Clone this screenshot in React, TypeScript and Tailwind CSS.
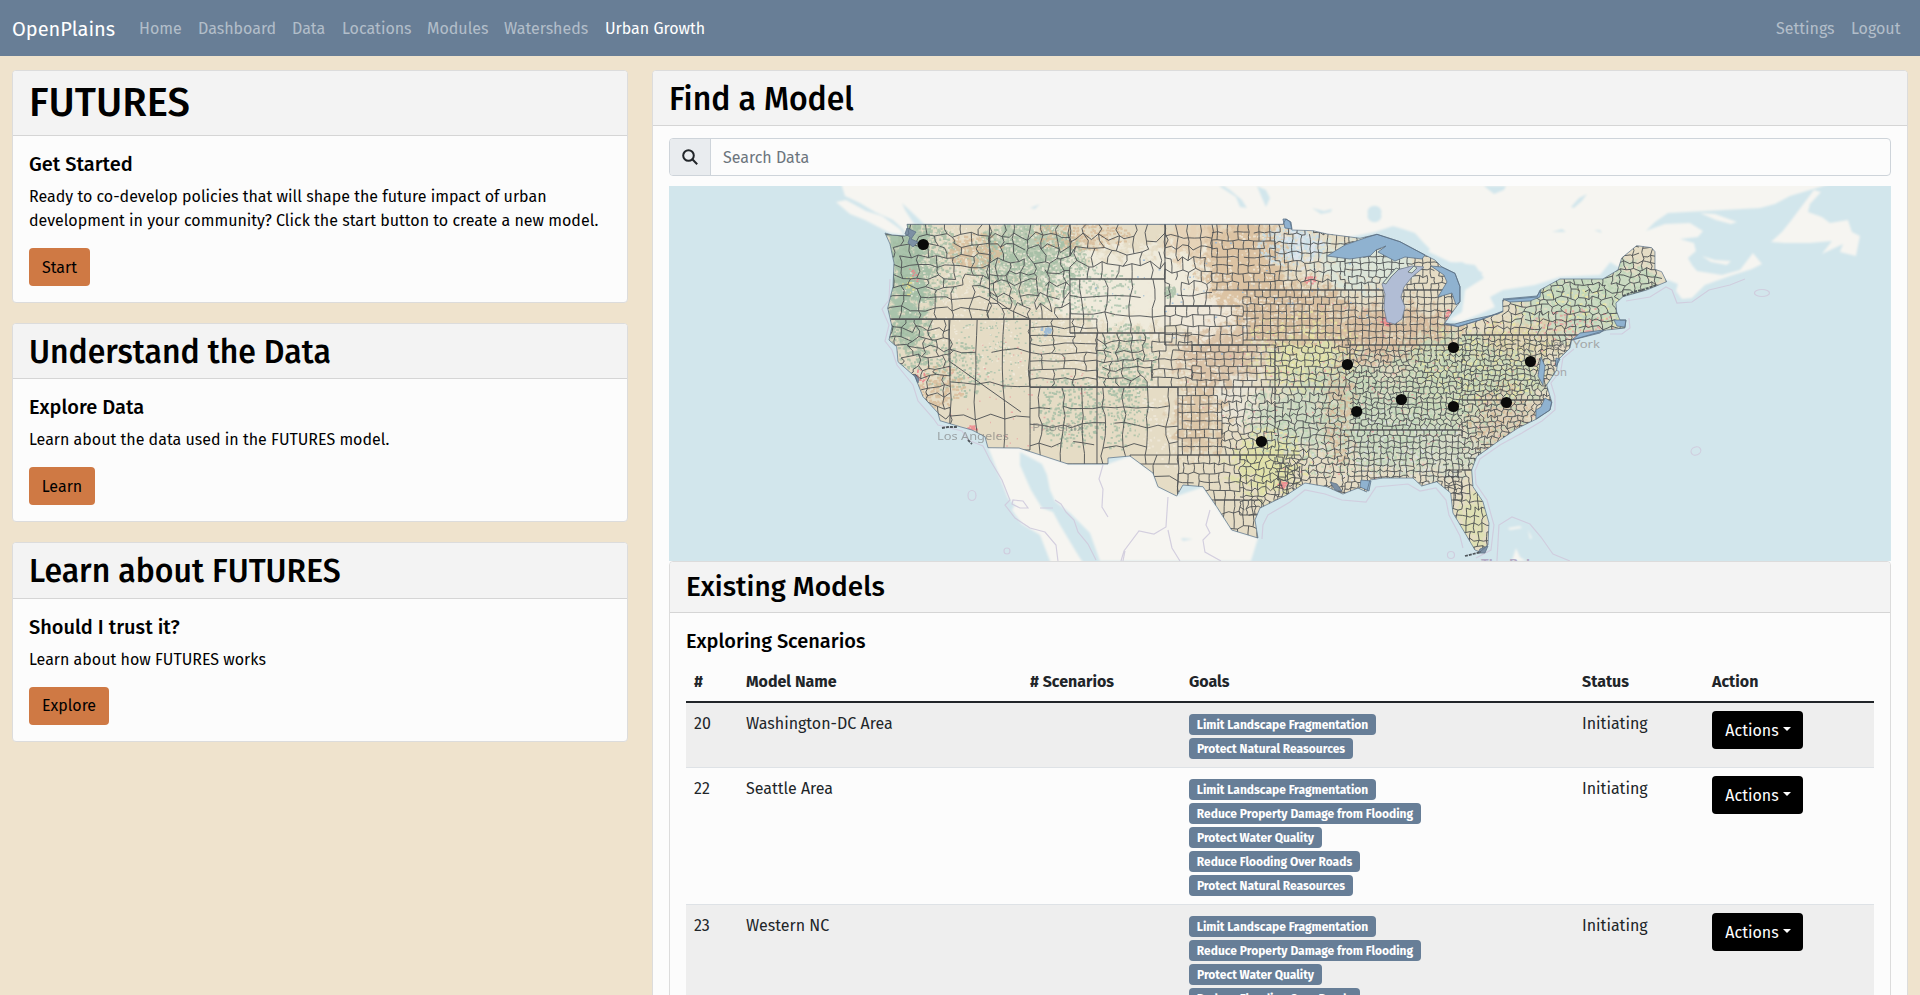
import React from "react";

const NAV: [string, string][] = [
  ["Home", "w-[43px]"],
  ["Dashboard", "w-[78px]"],
  ["Data", "w-[34px]"],
  ["Locations", "w-[69px]"],
  ["Modules", "w-[61px]"],
  ["Watersheds", "w-[85px]"],
  ["Urban Growth", "w-[100px]"],
];

const LIMIT: [string, string] = ["Limit Landscape Fragmentation", "w-[187px]"];
const DAMAGE: [string, string] = ["Reduce Property Damage from Flooding", "w-[232px]"];
const WATER: [string, string] = ["Protect Water Quality", "w-[133px]"];
const ROADS: [string, string] = ["Reduce Flooding Over Roads", "w-[171px]"];
const NATURAL: [string, string] = ["Protect Natural Reasources", "w-[164px]"];

const MODELS = [
  { id: 20, name: "Washington-DC Area", goals: [LIMIT, NATURAL] },
  { id: 22, name: "Seattle Area", goals: [LIMIT, DAMAGE, WATER, ROADS, NATURAL] },
  { id: 23, name: "Western NC", goals: [LIMIT, DAMAGE, WATER, ROADS, NATURAL] },
];

/* ---------- map geometry ---------- */

const US =
  "M885 233L892 235L905 236L909 234L907 224.300L1283 224.300L1286 219L1290 221.700L1292 230L1313 230.700L1327 234L1343 236L1360 238.300L1377 234.300L1400 241.700L1425 255L1435 260L1442 267L1455 273.300L1460 286.700L1460 301.700L1449 317L1445 323L1458 326.700L1480 320L1503 311.700L1502.700 300L1537 297L1540 290L1560 279L1603 279L1618 270L1621.700 258L1636.700 245.700L1651.700 247.700L1655 251.700L1655 269.300L1661.700 271.700L1666.700 281.700L1646.700 290L1623 296.700L1616 303L1616.700 311.700L1620 320L1626 320L1625 328L1606.700 330L1571.700 340L1570 348L1558 360L1556.700 370L1546.700 385L1551.700 401.700L1550 410L1536.700 419L1518 428L1500 440L1476.700 456.700L1471.700 470L1473 486.700L1483 501.700L1489 523L1488 545L1480 552L1475 550L1465 533L1453 513L1450.700 493L1436.700 481.700L1421.700 486L1413 478L1383 478L1370 480L1366.700 492L1358 488L1343 494L1326.700 486.700L1305 483L1286.700 495L1260 508L1255 520L1258 538L1231.700 530L1216.700 506.700L1203 486.700L1183 485L1176.700 496L1158 486.700L1153 473L1130 456L1108 458L1108 464L1068 464L1019 448L988 447.700L985 436.700L972 430L960 426.700L940 420.700L938 413L923 396.700L915 376.700L898 361.700L896.700 346.700L889 340L892 326.700L887.700 308L893 286.700L894 263L890 244Z";

function rng(seed: number) {
  let s = seed;
  return () => {
    s = (s * 1664525 + 1013904223) % 4294967296;
    return s / 4294967296;
  };
}

type Zone = [x0: number, y0: number, x1: number, y1: number, w: number, h: number, jitter: number];

const ZONES: Zone[] = [
  [884, 224, 989, 319, 19, 11, 0.3],
  [989, 224, 1070, 319, 13, 12, 0.45],
  [1070, 279, 1165, 333, 24, 19, 0.2],
  [1070, 224, 1165, 279, 15, 13, 0.4],
  [884, 319, 950, 425, 14, 10, 0.45],
  [950, 319, 1030, 450, 27, 32, 0.12],
  [1030, 319, 1097, 387, 24, 9, 0.2],
  [1097, 333, 1152, 387, 15, 9, 0.35],
  [1030, 387, 1178, 464, 22, 19, 0.2],
  [1130, 455, 1178, 500, 24, 24, 0.35],
  [1152, 333, 1192, 387, 13, 9, 0.15],
  [1165, 224, 1212, 306, 12, 12, 0.25],
  [1212, 224, 1275, 290, 11, 8.500, 0.12],
  [1165, 306, 1243, 345, 12, 10, 0.15],
  [1275, 224, 1345, 290, 9, 9, 0.2],
  [1243, 290, 1345, 340, 8, 7, 0.1],
  [1192, 345, 1275, 387, 9, 7, 0.1],
  [1178, 387, 1222, 455, 9, 8.500, 0.06],
  [1178, 455, 1240, 500, 10, 9, 0.15],
  [1215, 500, 1262, 540, 9, 12, 0.2],
  [1222, 387, 1275, 455, 8, 7.500, 0.3],
  [1240, 455, 1300, 515, 7.500, 7, 0.4],
  [1275, 340, 1350, 387, 7.500, 6.500, 0.28],
  [1275, 387, 1345, 500, 7.500, 7, 0.35],
  [1345, 236, 1462, 290, 8, 7, 0.2],
  [1345, 290, 1462, 345, 7, 6.500, 0.15],
  [1350, 345, 1462, 430, 6.200, 5.200, 0.4],
  [1345, 430, 1462, 500, 6.500, 6, 0.3],
  [1462, 240, 1670, 335, 9, 7.500, 0.35],
  [1462, 335, 1580, 400, 6, 5, 0.4],
  [1462, 400, 1560, 470, 6.500, 5.500, 0.4],
  [1445, 470, 1495, 555, 8, 8, 0.25],
];

function buildCounties() {
  const r = rng(7);
  let d = "";
  for (const [x0, y0, x1, y1, w, h, j] of ZONES) {
    const rows = Math.max(1, Math.round((y1 - y0) / h));
    const cols = Math.max(1, Math.round((x1 - x0) / w));
    const ch = (y1 - y0) / rows;
    const cw = (x1 - x0) / cols;
    const pts: number[][][] = [];
    for (let a = 0; a <= rows; a++) {
      const line: number[][] = [];
      for (let b = 0; b <= cols * 2; b++) {
        const edge = a === 0 || a === rows;
        line.push([
          x0 + (b * cw) / 2 + (b === 0 || b === cols * 2 ? 0 : (r() - 0.5) * cw * j),
          y0 + a * ch + (edge ? 0 : (r() - 0.5) * 1.8 * ch * j),
        ]);
      }
      pts.push(line);
    }
    for (let a = 0; a <= rows; a++) {
      let pen = false;
      pts[a].forEach(([x, y], b) => {
        const skip = a > 0 && a < rows && r() < 0.08;
        d += (b === 0 || !pen ? "M" : "L") + x.toFixed(1) + " " + y.toFixed(1);
        pen = !skip;
      });
    }
    for (let a = 0; a < rows; a++) {
      const off = r() < 0.5 ? 0 : 1;
      for (let b = off; b <= cols * 2; b += 2) {
        const p = pts[a][b];
        const q = pts[a + 1][b];
        const mx = (p[0] + q[0]) / 2 + (r() - 0.5) * cw * j;
        const my = (p[1] + q[1]) / 2;
        d += `M${p[0].toFixed(1)} ${p[1].toFixed(1)}L${mx.toFixed(1)} ${my.toFixed(1)}L${q[0].toFixed(1)} ${q[1].toFixed(1)}`;
      }
    }
  }
  return d;
}

type Speck = [color: string, x: number, y: number, rx: number, ry: number, n: number, size: number];

const SPECKS: Speck[] = [
  ["#a3bda4", 925, 262, 38, 40, 500, 2.4],
  ["#a3bda4", 1025, 262, 60, 42, 800, 2.4],
  ["#e8e4d2", 1025, 270, 70, 45, 380, 1.8],
  ["#e8e4d2", 950, 262, 30, 40, 240, 1.8],
  ["#a3bda4", 912, 340, 24, 30, 220, 2.2],
  ["#a3bda4", 955, 370, 32, 30, 170, 2],
  ["#a9c2ab", 1010, 350, 55, 45, 200, 1.5],
  ["#a3bda4", 1125, 360, 30, 40, 330, 2.2],
  ["#a3bda4", 1070, 410, 32, 38, 280, 2],
  ["#a3bda4", 1120, 415, 30, 35, 180, 1.8],
  ["#a9c2ab", 1090, 290, 45, 30, 200, 2],
  ["#a3bda4", 1169, 291, 5, 7, 40, 2.2],
  ["#d8bb98", 975, 250, 28, 18, 220, 2.4],
  ["#d8bb98", 935, 385, 28, 22, 150, 2.2],
  ["#d8bb98", 1080, 235, 50, 15, 260, 2],
  ["#efe9da", 1100, 310, 75, 80, 420, 2],
  ["#efe9da", 1180, 400, 45, 70, 300, 2],
  ["#efe9da", 1260, 300, 80, 70, 400, 1.8],
  ["#f1ecdf", 1010, 300, 110, 80, 400, 1.5],
  ["#e4ddc8", 1400, 380, 160, 110, 1400, 2],
  ["#e4ddc8", 1570, 310, 90, 50, 300, 2],
  ["#bcd4b5", 1330, 420, 90, 55, 600, 2],
  ["#bcd4b5", 1440, 400, 90, 70, 700, 2],
  ["#e9e6a4", 1300, 350, 60, 40, 260, 2],
  ["#e9e6a4", 1270, 460, 40, 35, 220, 2],
  ["#e9e6a4", 1480, 360, 70, 45, 320, 2],
  ["#dfe2e8", 1390, 450, 90, 40, 240, 1.6],
  ["#d8bb98", 1340, 405, 14, 60, 140, 2],
  ["#d8bb98", 1500, 420, 35, 40, 170, 2],
  ["#c8dfe8", 1290, 245, 34, 20, 220, 2],
  ["#bcd4b5", 1600, 290, 60, 35, 380, 2],
  ["#e9e6a4", 1570, 315, 60, 30, 120, 2],
  ["#e9a2a0", 1380, 390, 200, 90, 200, 1.6],
  ["#e9a2a0", 1580, 325, 50, 18, 100, 2],
  ["#e9a2a0", 1000, 400, 100, 60, 60, 1.4],
  ["#f08088", 971, 427, 5, 3, 14, 2],
  ["#f08088", 1281, 484, 5, 4, 22, 2],
  ["#f08088", 1385, 321, 5, 5, 22, 2],
  ["#f08088", 1448, 314, 4, 5, 16, 2],
  ["#f08088", 1310, 279, 6, 4, 14, 2],
  ["#f08088", 920, 376, 5, 8, 16, 1.8],
  ["#f08088", 912, 275, 6, 8, 12, 1.6],
  ["#efe28b", 908, 285, 6, 9, 16, 1.8],
  ["#8fb4d8", 1045, 330, 5, 5, 24, 2.2],
  ["#8fb4d8", 1240, 300, 150, 60, 70, 1.4],
];

function buildSpecks([, cx, cy, rx, ry, n, size]: Speck, seed: number) {
  const r = rng(seed * 977 + 13);
  let d = "";
  for (let i = 0; i < n; i++) {
    const a = r() * Math.PI * 2;
    const k = Math.pow(r(), 0.6);
    const x = cx + Math.cos(a) * k * rx;
    const y = cy + Math.sin(a) * k * ry;
    const w = size * (0.6 + r());
    d += `M${x.toFixed(1)} ${y.toFixed(1)}h${w.toFixed(1)}v${size}h-${w.toFixed(1)}z`;
  }
  return d;
}

const COUNTIES = buildCounties();
const SPECK_PATHS = SPECKS.map((s, i) => ({ fill: s[0], d: buildSpecks(s, i + 1) }));

const TINTS: [string, number, number, number, number][] = [
  ["#a9c3ab", 905, 270, 22, 75],
  ["#bccbb4", 1030, 255, 52, 32],
  ["#efebdc", 1140, 290, 90, 40],
  ["#e6d3b8", 1215, 240, 50, 20],
  ["#dcc3a3", 1245, 265, 42, 50],
  ["#d8bfa0", 1290, 315, 60, 32],
  ["#efe8da", 1200, 315, 38, 18],
  ["#dac3a8", 1220, 360, 40, 30],
  ["#dcc6a8", 1198, 420, 22, 35],
  ["#e9e4d6", 1240, 400, 22, 25],
  ["#dde5ec", 1300, 245, 18, 16],
  ["#dce5d9", 1365, 265, 48, 25],
  ["#d9bfa2", 1395, 335, 65, 28],
  ["#dde0ae", 1305, 362, 38, 22],
  ["#ccd8bc", 1345, 385, 40, 25],
  ["#cfdac4", 1300, 420, 45, 30],
  ["#d8c1a4", 1338, 415, 9, 45],
  ["#dfe0ac", 1265, 465, 28, 28],
  ["#cdd9c2", 1400, 430, 60, 40],
  ["#ccd8ba", 1470, 380, 75, 45],
  ["#dccfb8", 1505, 420, 30, 30],
  ["#d6dcc8", 1450, 455, 40, 20],
  ["#cbdbc2", 1590, 300, 75, 40],
  ["#dfe0b4", 1475, 520, 18, 30],
  ["#dcd0ae", 1520, 340, 40, 16],
];

const PINS = [
  [923.3, 244.500],
  [1453.500, 347.500],
  [1347.500, 364.500],
  [1356.700, 411.500],
  [1401.500, 399.500],
  [1453.500, 406.500],
  [1261.500, 441.500],
  [1530.500, 361.500],
  [1506.500, 402.500],
];

function ModelMap() {
  return (
    <svg viewBox="669 186 1222 375" className="block h-[375px] w-full" preserveAspectRatio="none">
      <defs>
        <clipPath id="us">
          <path d={US} />
        </clipPath>
        <filter id="patchy" x="-10%" y="-10%" width="120%" height="120%">
          <feGaussianBlur stdDeviation="4" result="b" />
          <feTurbulence type="fractalNoise" baseFrequency="0.12" numOctaves="4" seed="4" result="n" />
          <feDisplacementMap in="b" in2="n" scale="60" xChannelSelector="R" yChannelSelector="G" />
        </filter>
        <filter id="edge">
          <feGaussianBlur stdDeviation="0.8" />
        </filter>
      </defs>
      <rect x="669" y="186" width="1222" height="375" fill="#d2e6ec" />

      <g filter="url(#edge)">
        <path
          fill="#f6f5f1"
          d="M840 180L845 196L860 203L875 212L893 220L903 229L908 238L1360 245L1425 250L1450 262L1475 265L1484 278L1465 290L1462 312L1449 320L1462 322L1480 314L1495 307L1490 297L1503 290L1535 285L1560 277L1600 275L1620 250L1645 232L1655 222L1668 213L1760 208L1775 204L1790 196L1830 184Z"
        />
        <path fill="#f6f5f1" d="M836 202L846 200L866 211L882 216L900 229L904 235L890 233L865 220L850 214Z" />
        <path fill="#f6f5f1" d="M1610 262L1622 247L1640 233L1665 224L1690 223L1703 231L1698 237L1680 239L1694 243L1696 251L1688 258L1692 265L1697 271L1722 275L1740 270L1753 253L1762 264L1752 269L1730 276L1705 285L1692 298L1682 299L1676 291L1678 284L1668 280L1655 285L1640 280Z" />
        <path fill="#f6f5f1" d="M1700 213L1715 214L1737 222L1731 224L1716 220ZM1702 256L1715 260L1731 261L1727 265L1711 262Z" />
        <path fill="#f6f5f1" d="M1814 190L1821 192L1810 204L1808 212L1822 217L1830 223L1848 220L1852 232L1860 236L1856 256L1840 252L1843 244L1822 254L1832 241L1810 243L1785 243L1771 242L1782 232L1790 222Z" />
        <path fill="#f6f5f1" d="M988 447L1020 448L1068 464L1108 464L1130 456L1153 473L1158 487L1177 496L1203 487L1232 530L1258 538L1251 561L1100 561L1090 533L1070 513L1055 501L1050 490L1047 475L1042 464L1020 452L1020 465L1031 490L1042 508L1053 512L1060 525L1075 550L1085 566L1052 566L1040 535L1022 524L1012 510L1015 505L1008 498L1001 480Z" />
        <path fill="#f6f5f1" d="M1516 548L1520 557L1526 561L1512 561ZM1508 528l12-2 2 2-12 2zM1528 530l4 8-2 1z" />
        <g fill="#d2e6ec">
          <path d="M1219 186L1236 197L1240 207L1247 208L1242 200L1230 190L1224 186ZM1257 186L1262 198L1266 207L1270 198L1266 190Z" />
          <path d="M1368 214a7 6 0 1 0 13 0a7 6 0 1 0 -13 0M1312 208l12 3 8-2-1 3-10 2z" />
          <path d="M1340 240L1350 237L1375 232L1393 226L1403 229L1415 233L1423 242L1430 249L1425 258L1380 250Z" />
          <path d="M1437 264L1462 262L1483 273L1475 278L1462 290L1458 284ZM1484 186l10 8 10-4 2-4zM1571 207l8-9 8-4-5 7-8 7zM1552 232l10-3 4 3zM1594 230l6 0 2 3z" />
          <path d="M1456 324L1480 314L1503 308L1504 313L1480 322Z" />
          <path d="M1500 300L1512 296L1535 293L1543 285L1541 296Z" />
          <path d="M902 203L918 218L926 226L914 224L905 210ZM1030 208l10-4-5 5zM1181 538l12 1-10 2z" />
        </g>
      </g>

      <g fill="none" stroke="#d0cbdd" strokeWidth="1.200" opacity="0.9">
        <path d="M890 279L889 300L882 309L889 325L885 341L892 350L897 365L913 385L918 401L933 418L938 425L962 431L968 440L983 446L990 460L1002 480L1010 500L1005 505L1015 518L1030 528L1045 532L1056 545L1058 561" />
        <path d="M1040 508L1053 508M1055 500l6 4 5 8 8 8 4 12 10 12 8 16M1012 504l8 4 8 0-5-7-10-1z" />
        <path d="M1103 465l-4 14 4 10-1 18 6 10M1168 497l-2 30-12 7-15-3-15 20-3 10M1125 551l-2 10M1168 530l4 18 8 13M1210 510l-4 15 4 8-7 7 2 12 16 9" />
        <path d="M1262 539L1263 525L1268 515L1290 502L1305 490L1325 494L1342 500L1366 502L1376 487L1408 484L1420 491L1436 488L1446 500L1449 515L1460 536L1463 548M1476 558L1491 550L1494 525L1487 500L1476 484L1475 471L1480 459L1500 445L1522 433L1542 421L1555 410L1555 396L1551 383L1561 370L1563 358L1574 349" />
        <path d="M1629 318l1 10-8 6-12 0M1626 301L1650 297L1666 287L1672 290L1677 303L1692 302L1709 290L1730 285L1745 279" />
        <ellipse cx="972" cy="495.500" rx="4" ry="5" />
        <circle cx="1007" cy="551" r="3" />
        <ellipse cx="1762" cy="293" rx="7.500" ry="3.500" />
        <ellipse cx="1696" cy="451" rx="5" ry="4" transform="rotate(-20 1696 451)" />
        <circle cx="1451" cy="555" r="3.500" />
        <path d="M1497 561L1499 525L1512 517L1530 524L1541 537L1553 554L1570 561" />
      </g>

      <g fontFamily="'Noto Sans', sans-serif" fill="#a3a6a8">
        <text x="1573" y="348" fontSize="10.500" textLength="27" lengthAdjust="spacingAndGlyphs">York</text>
        <text x="1503" y="376" fontSize="10.500" textLength="64" lengthAdjust="spacingAndGlyphs">Washington</text>
        <text x="1481" y="567" fontSize="11" fontWeight="bold" fill="#b3abc4" textLength="90" lengthAdjust="spacingAndGlyphs">The Bahamas</text>
      </g>

      <g clipPath="url(#us)">
        <path d={US} fill="#e5dcc5" />
        <g filter="url(#patchy)">
          {TINTS.map(([fill, cx, cy, rx, ry], i) => (
            <ellipse key={i} cx={cx} cy={cy} rx={rx} ry={ry} fill={fill} />
          ))}
        </g>
        {SPECK_PATHS.map((s, i) => (
          <path key={i} d={s.d} fill={s.fill} opacity="0.8" />
        ))}
        <path d={COUNTIES} fill="none" stroke="#4e5254" strokeWidth="1" opacity="0.92" />
        <path
          fill="none"
          stroke="#55585a"
          strokeWidth="1"
          d="M892 319.500H1030M989.500 224V296L1010 310L1030 319M1030 319V387M1070 279V333H1097V464M1165 224V345M1030 387.500H1178M1178 387V455M949 319V361L1021 412M1165 306H1240M1192 345H1270M1275 350V400"
        />
      </g>

      <g fill="#8fb2d0" stroke="#5f7488" strokeWidth="0.800">
        <path d="M1327 256L1345 245L1365 238L1377 234.300L1400 241.700L1425 255L1422 259L1405 257L1395 261L1378 252L1386 246L1376 250L1370 256L1350 259Z" />
        <path d="M1431 266L1442 267L1455 273.300L1460 286.700L1460 301.700L1456 305L1452 293L1438 297L1447 282L1444 275Z" />
        <path d="M1444 324L1458 326.700L1480 320L1503 311L1498 314L1470 320L1455 324Z" />
        <path d="M1503 299L1537 296L1541 290L1540 297L1530 301L1510 302Z" />
        <path d="M1536 419L1550 410L1552 402L1545 398L1541 407L1536 410ZM1541 357L1545 366L1543 385L1538 376ZM1572 340L1600 333L1604 330L1580 333ZM1614 320L1626 320L1625 327L1617 326ZM1283 219L1286 219L1291 222L1292 229L1285 228ZM1361 480L1371 481L1369 491L1360 487ZM1556 358l4 1-4 8z" />
        <path fill="#7c90a4" d="M907 228l9 4-5 7 7 3-5 5-5-4 2-6-5-3zM914 374l5 5-1 4zM1330 482l7 2 5 7-7-1zM1480 549l8-3-3 7-7 0z" />
      </g>
      <path
        fill="#b1bdd5"
        stroke="#7b8798"
        strokeWidth="0.900"
        d="M1382 284L1393 271L1412 266L1424 267L1412 277L1404 287L1401 297L1405 307L1402 319L1395 324L1387 322L1384 308L1385 294Z"
      />
      <path
        fill="#d8e6d8"
        stroke="#5f6b70"
        strokeWidth="0.800"
        d="M1383 283L1396 268L1399 269L1391 277L1386 284ZM1408 272l6-6 3 2-5 5z"
      />
      <path d={US} fill="none" stroke="#5a6f85" strokeWidth="0.900" strokeLinejoin="round" opacity="0.8" />
      <path d="M1623 296l10-4 12-3 12-4M1465 556l8-2 8-2M942 428l6-1 9 0M968 440l4 4" fill="none" stroke="#4f565b" strokeWidth="1.800" strokeDasharray="3 1" />

      <g fontFamily="'Noto Sans', sans-serif" fill="#777" opacity="0.6">
        <text x="937" y="440" fontSize="10.500" textLength="72" lengthAdjust="spacingAndGlyphs">Los Angeles</text>
        <text x="1032" y="431" fontSize="10.500" textLength="52" lengthAdjust="spacingAndGlyphs">Phoenix</text>
        <text x="1545" y="348" fontSize="10.500">New</text>
      </g>

      {PINS.map(([x, y]) => (
        <circle key={`${x}-${y}`} cx={x} cy={y} r="5.600" fill="#0a0a0a" />
      ))}
    </svg>
  );
}

/* ---------- page ---------- */

type CardProps = {
  title: string;
  big?: boolean;
  subtitle: string;
  text: React.ReactNode;
  button: string;
  buttonWidth: string;
};

function InfoCard({ title, big, subtitle, text, button, buttonWidth }: CardProps) {
  return (
    <section className="overflow-hidden rounded border border-[#dcdcdc] bg-[#fcfcfc]">
      <header className="border-b border-[#d5d5d5] bg-[#f3f3f3] px-4">
        {big ? (
          <h1 className="py-2 text-[40px] leading-[48px] font-medium">{title}</h1>
        ) : (
          <h2 className="pt-[9px] pb-[7px] text-[32px] leading-[38.4px] font-medium">{title}</h2>
        )}
      </header>
      <div className="p-4">
        <h5 className="mb-2 text-xl leading-6 font-medium">{subtitle}</h5>
        <p className="mb-[15px] pt-px text-base leading-6 whitespace-nowrap">{text}</p>
        <button className={`block h-[38px] rounded bg-[#cf7944] pt-px text-base ${buttonWidth}`}>{button}</button>
      </div>
    </section>
  );
}

export default function App() {
  return (
    <div className="h-[995px] w-full overflow-hidden bg-[#efe3cd] font-['Fira_Sans','Noto_Sans',sans-serif] text-black">
      <nav className="flex h-14 items-center bg-[#687e96] px-3 pt-px text-base whitespace-nowrap">
        <a className="mr-6 w-[103px] text-xl leading-[30px] text-white">OpenPlains</a>
        <div className="flex grow gap-4">
          {NAV.map(([label, width]) => (
            <a key={label} className={`${width} ${label === "Urban Growth" ? "text-white" : "text-white/50"}`}>
              {label}
            </a>
          ))}
        </div>
        <div className="flex gap-4 pr-2 text-white/50">
          <a className="w-[59px]">Settings</a>
          <a className="w-[49px]">Logout</a>
        </div>
      </nav>

      <main className="flex items-start gap-6 pt-3.5 pr-3 pl-3">
        <div className="flex w-[616px] shrink-0 flex-col gap-5">
          <InfoCard
            title="FUTURES"
            big
            subtitle="Get Started"
            text={
              <>
                Ready to co-develop policies that will shape the future impact of urban
                <br />
                development in your community? Click the start button to create a new model.
              </>
            }
            button="Start"
            buttonWidth="w-[61px]"
          />
          <InfoCard
            title="Understand the Data"
            subtitle="Explore Data"
            text="Learn about the data used in the FUTURES model."
            button="Learn"
            buttonWidth="w-[66px]"
          />
          <InfoCard
            title="Learn about FUTURES"
            subtitle="Should I trust it?"
            text="Learn about how FUTURES works"
            button="Explore"
            buttonWidth="w-[80px]"
          />
        </div>

        <section className="min-w-0 grow overflow-hidden rounded border border-[#dcdcdc] bg-[#fcfcfc]">
          <header className="border-b border-[#d5d5d5] bg-[#f3f3f3] px-4 pt-[9px] pb-[7px]">
            <h2 className="text-[32px] leading-[38.4px] font-medium">Find a Model</h2>
          </header>
          <div className="px-4 pt-3">
            <div className="mb-[9.6px] flex h-[38px] overflow-hidden rounded border border-[#ced4da] bg-[#fcfcfc]">
              <span className="flex w-[41px] items-center justify-center border-r border-[#ced4da] bg-[#e9ecef]">
                <svg viewBox="0 0 16 16" className="size-4" fill="none" stroke="#212529" strokeWidth="2">
                  <circle cx="6.500" cy="6.500" r="5.300" />
                  <path d="M10.300 10.300L15.200 15.200" />
                </svg>
              </span>
              <input
                className="grow bg-transparent px-3 pt-px text-base outline-none placeholder:text-[#6c757d]"
                placeholder="Search Data"
              />
            </div>
            <ModelMap />
            <section className="overflow-hidden rounded border border-[#dcdcdc]">
              <header className="border-b border-[#d5d5d5] bg-[#f3f3f3] px-4 py-2">
                <h3 className="text-[28px] leading-[33.6px] font-medium">Existing Models</h3>
              </header>
              <div className="p-4">
                <h5 className="mb-2 text-xl leading-6 font-medium">Exploring Scenarios</h5>
                <table className="w-full table-fixed border-collapse text-left text-base leading-6 text-[#212529]">
                  <colgroup>
                    <col className="w-[52px]" />
                    <col className="w-[284px]" />
                    <col className="w-[159px]" />
                    <col className="w-[393px]" />
                    <col className="w-[130px]" />
                    <col />
                  </colgroup>
                  <thead>
                    <tr className="border-b-2 border-[#212529]">
                      {["#", "Model Name", "# Scenarios", "Goals", "Status", "Action"].map((h) => (
                        <th key={h} className="px-2 pt-[9px] pb-[7px] font-bold">
                          {h}
                        </th>
                      ))}
                    </tr>
                  </thead>
                  <tbody>
                    {MODELS.map((m) => (
                      <tr key={m.id} className="border-b border-[#dee2e6] align-top odd:bg-[#eeeeee]">
                        <td className="px-2 pt-[9px]">{m.id}</td>
                        <td className="px-2 pt-[9px]">{m.name}</td>
                        <td className="p-2" />
                        <td className="p-2">
                          {m.goals.map(([goal, width]) => (
                            <div key={goal} className="h-6 pt-[3.400px]">
                              <span
                                className={`block h-[21px] rounded bg-[#677e97] pt-px text-center text-xs leading-5 font-bold whitespace-nowrap text-white ${width}`}
                              >
                                {goal}
                              </span>
                            </div>
                          ))}
                        </td>
                        <td className="px-2 pt-[9px]">Initiating</td>
                        <td className="px-2 pt-[8.400px]">
                          <button className="flex h-[38px] w-[91px] items-center justify-center gap-1 rounded bg-black pt-0.5 pl-px text-white">
                            Actions
                            <svg viewBox="0 0 8 4" className="mb-1 h-1 w-2">
                              <path d="M0 0h8L4 4z" fill="white" />
                            </svg>
                          </button>
                        </td>
                      </tr>
                    ))}
                  </tbody>
                </table>
              </div>
            </section>
          </div>
        </section>
      </main>
    </div>
  );
}
